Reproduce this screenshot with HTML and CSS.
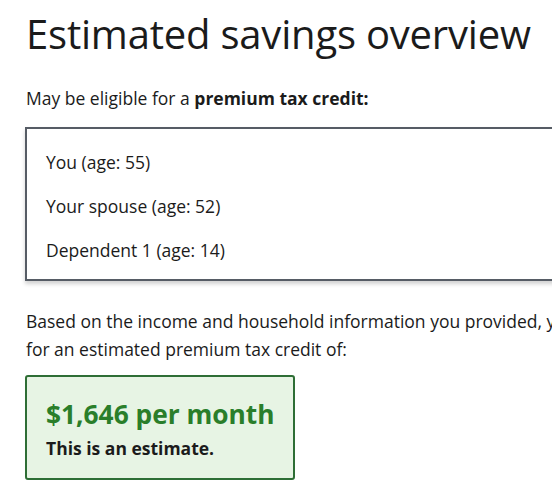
FILE: index.html
```html
<!DOCTYPE html>
<html lang="en">
<head>
<meta charset="utf-8">
<title>Estimated savings overview</title>
<link rel="stylesheet" href="styles.css">
</head>
<body>
<main class="page">
  <h1 class="title">Estimated savings overview</h1>
  <p class="lead">May be eligible for a <strong>premium tax credit:</strong></p>
  <ul class="members">
    <li>You (age: 55)</li>
    <li>Your spouse (age: 52)</li>
    <li>Dependent 1 (age: 14)</li>
  </ul>
  <p class="basis">Based on the income and household information you provided, you may qualify<br>for an estimated premium tax credit of:</p>
  <div class="credit">
    <p class="amount">$1,646 per month</p>
    <p class="note">This is an estimate.</p>
  </div>
</main>
</body>
</html>
```

FILE: styles.css
```css
html {
  overflow: hidden;
}
body {
  margin: 0;
  background: #fff;
  color: #1b1b1b;
  font-family: "Open Sans", "Liberation Sans", sans-serif;
  font-size: 17.5px;
  line-height: 24px;
}
.page {
  width: 700px;
  padding: 9px 0 0 26px;
}
.title {
  margin: 0;
  font-size: 40px;
  font-weight: 400;
  line-height: 50px;
  letter-spacing: -0.2px;
}
.lead {
  margin: 27px 0 0;
  white-space: nowrap;
}
.lead strong {
  font-weight: 700;
}
.members {
  list-style: none;
  margin: 17px 0 0 -1px;
  padding: 21px 19px 17px;
  border: 2px solid #565c65;
  box-shadow: 0 3px 4px rgba(0, 0, 0, 0.18);
  display: flex;
  flex-direction: column;
  gap: 20px;
}
.basis {
  margin: 26px 0 0;
  line-height: 28px;
  white-space: nowrap;
}
.credit {
  margin: 12px 0 0 -1px;
  width: 270px;
  box-sizing: border-box;
  padding: 20px 19px 18px;
  background: #e7f4e4;
  border: 2px solid #2e6e35;
  border-radius: 3px;
}
.amount {
  margin: 0;
  color: #2a7e2a;
  font-size: 26.3px;
  font-weight: 700;
  line-height: 34px;
  white-space: nowrap;
}
.note {
  margin: 5px 0 0;
  font-weight: 700;
}
```
